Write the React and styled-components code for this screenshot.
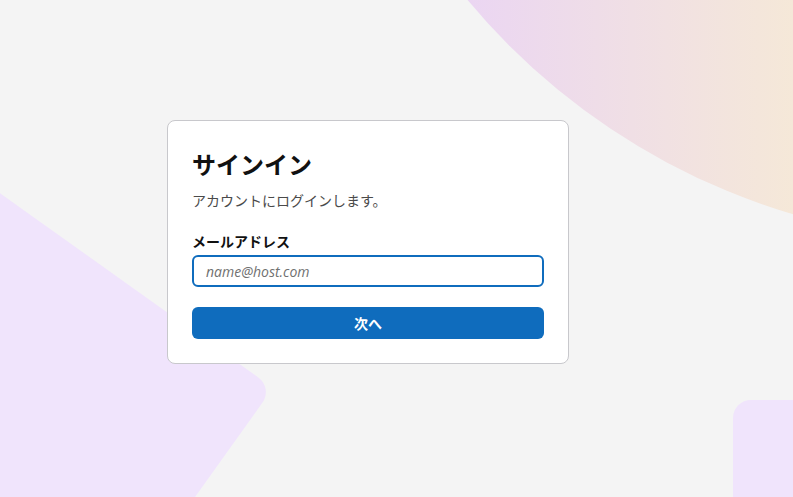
import React from "react";
import styled, { createGlobalStyle } from "styled-components";

const GlobalStyle = createGlobalStyle`
  html, body {
    margin: 0;
    padding: 0;
    background-color: #f4f4f4;
  }
  body {
    font-family: "Noto Sans CJK JP", "Noto Sans", sans-serif;
  }
`;

const Page = styled.div`
  position: relative;
  width: 793px;
  height: 497px;
  overflow: hidden;
  background-color: #f4f4f4;
`;

// decorative background drawing
const Backdrop = styled.svg`
  position: absolute;
  inset: 0;
  width: 100%;
  height: 100%;
`;

const Stage = styled.main`
  position: relative;
  display: flex;
  align-items: flex-start;
  padding: 120px 0 0 167px;
`;

const Card = styled.section`
  width: 352px;
  padding: 24px;
  background-color: #ffffff;
  border: 1px solid #c8c8cc;
  border-radius: 8px;
  display: flex;
  flex-direction: column;
`;

const Title = styled.h1`
  margin: 0;
  font-size: 24px;
  line-height: 37px;
  font-weight: 700;
  color: #111111;
`;

const Subtitle = styled.p`
  margin: 8px 0 0;
  font-size: 14px;
  line-height: 20px;
  color: #4a4a4a;
`;

const Label = styled.label`
  margin-top: 21px;
  font-size: 14px;
  line-height: 20px;
  font-weight: 700;
  color: #111111;
`;

const Input = styled.input`
  box-sizing: border-box;
  margin-top: 4px;
  width: 100%;
  height: 32px;
  padding: 0 12px;
  border: 2px solid #0f6cbd;
  border-radius: 6px;
  outline: none;
  font-family: "Open Sans", "Noto Sans", sans-serif;
  font-size: 14px;
  color: #242424;
  background: #ffffff;

  &::placeholder {
    color: #707070;
    font-style: italic;
  }
`;

const Button = styled.button`
  margin-top: 20px;
  height: 32px;
  border: none;
  border-radius: 6px;
  background-color: #0f6cbd;
  color: #ffffff;
  font-family: "Noto Sans CJK JP", sans-serif;
  font-size: 14px;
  font-weight: 700;
  cursor: pointer;
`;

const App = () => {
  return (
    <>
      <GlobalStyle />
      <Page>
        <Backdrop viewBox="0 0 793 497" preserveAspectRatio="none">
          <defs>
            <linearGradient id="arc" x1="312" y1="0" x2="793" y2="0" gradientUnits="userSpaceOnUse">
              <stop offset="0" stopColor="#e6d3f8" />
              <stop offset="0.33" stopColor="#ebd6f2" />
              <stop offset="1" stopColor="#f5e8d8" />
            </linearGradient>
          </defs>
          <circle cx="984" cy="-430" r="672" fill="url(#arc)" />
          <rect
            x="-445.5"
            y="157.9"
            width="600"
            height="600"
            rx="18"
            fill="#f0e4fc"
            transform="rotate(35.5 -145.5 457.9)"
          />
          <rect x="733" y="400" width="120" height="140" rx="18" fill="#f0e4fc" />
        </Backdrop>
        <Stage>
          <Card>
            <Title>サインイン</Title>
            <Subtitle>アカウントにログインします。</Subtitle>
            <Label htmlFor="email">メールアドレス</Label>
            <Input id="email" type="email" placeholder="name@host.com" autoFocus />
            <Button type="button">次へ</Button>
          </Card>
        </Stage>
      </Page>
    </>
  );
};

export default App;
